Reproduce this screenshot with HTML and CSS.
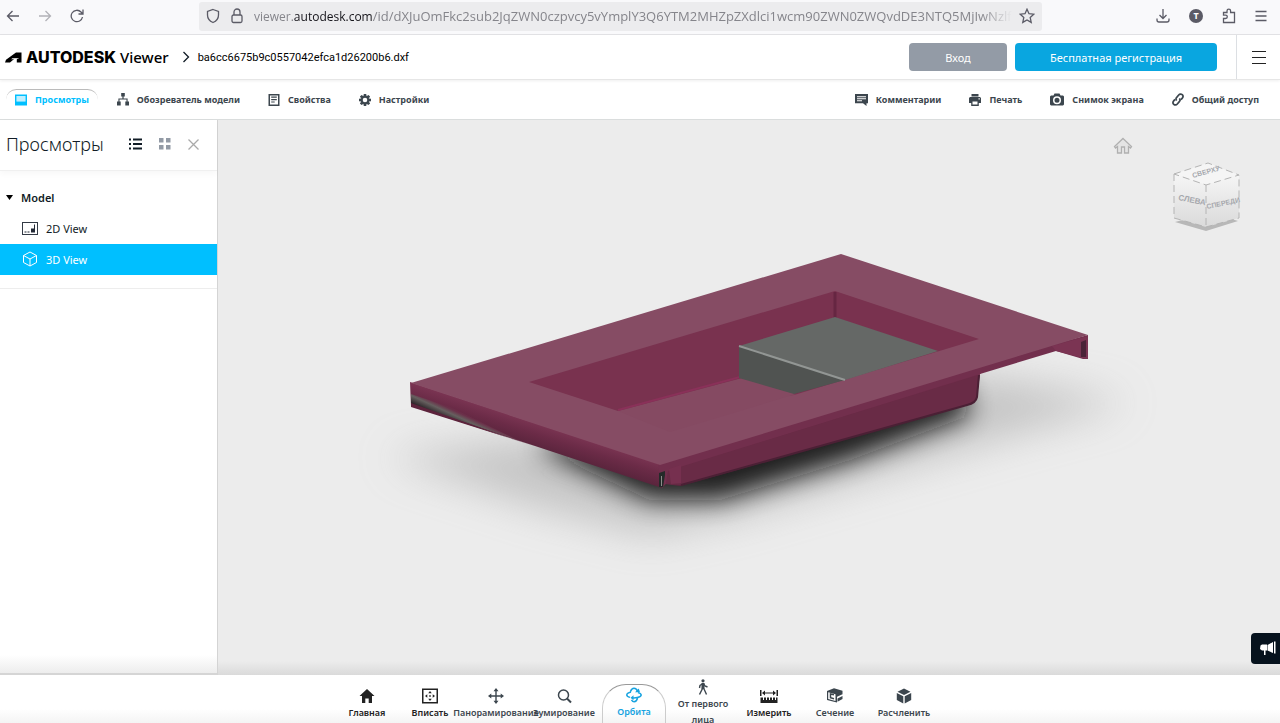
FILE: index.html
```html
<!DOCTYPE html>
<html lang="ru">
<head>
<meta charset="utf-8">
<title>Autodesk Viewer</title>
<link rel="stylesheet" href="styles.css">
</head>
<body>
<nav class="browser" aria-label="Браузер">
  <div class="browser-nav">
    <button class="icon-btn" aria-label="Назад"><svg width="14" height="14" viewBox="0 0 14 14" class="line"><path d="M13 7H1.500M6.500 2L1.500 7l5 5"/></svg></button>
    <button class="icon-btn faded" aria-label="Вперёд"><svg width="14" height="14" viewBox="0 0 14 14" class="line"><path d="M1 7h11.500M7.500 2l5 5-5 5"/></svg></button>
    <button class="icon-btn" aria-label="Обновить"><svg width="14" height="14" viewBox="0 0 14 14" class="line"><path d="M12.500 8A5.700 5.700 0 1 1 11 3l1.500 1.500M13 .5v4.500H8.500"/></svg></button>
  </div>
  <div class="address">
    <svg width="14" height="16" viewBox="0 0 14 16" class="line"><path d="M7 1.500L12.500 3.500v3.500c0 3.500-2 6-5.500 7.500C3.500 13 1.500 10.500 1.500 7V3.500z"/></svg>
    <svg width="12" height="16" viewBox="0 0 12 16" class="line"><rect x="1" y="7" width="10" height="7.500" rx="1.500"/><path d="M3 7V4a3 3 0 0 1 6 0v3"/></svg>
    <div class="url"><span class="domain">viewer.<b>autodesk.com</b></span>/id/dXJuOmFkc2sub2JqZWN0czpvcy5vYmplY3Q6YTM2MHZpZXdlci1wcm90ZWN0ZWQvdDE3NTQ5MjIwNzlfOGQ5MD</div>
    <button class="icon-btn" aria-label="Добавить закладку"><svg width="16" height="16" viewBox="0 0 16 16" class="line"><path d="M8 1.200l2 4.500 4.800.5-3.600 3.300 1 4.900L8 12l-4.200 2.400 1-4.900L1.200 6.200 6 5.700z"/></svg></button>
  </div>
  <div class="browser-tools">
    <button class="icon-btn" aria-label="Загрузки"><svg width="14" height="14" viewBox="0 0 14 14" class="line"><path d="M7 0v9M3.500 6L7 9.500 10.500 6M1 9.500V11a2 2 0 0 0 2 2h8a2 2 0 0 0 2-2V9.500"/></svg></button>
    <button class="avatar" aria-label="Профиль">T</button>
    <button class="icon-btn" aria-label="Расширения"><svg width="14" height="16" viewBox="0 0 14 16" class="line"><path d="M1.500 4.500H5V3a1.800 1.800 0 0 1 3.600 0v1.500h3.900v10h-11v-4H3.600a1.700 1.700 0 0 0 0-3.400H1.500z"/></svg></button>
    <button class="icon-btn" aria-label="Меню браузера"><svg width="12" height="12" viewBox="0 0 12 12" class="line"><path d="M.5 1.500h11M.5 6h11M.5 10.500h11"/></svg></button>
  </div>
</nav>

<header class="header">
  <a class="brand" href="#"><svg width="17" height="11" viewBox="0 0 17 11"><path d="M0 10.500L1 7.800 11 .5H16.500v10h-4.700V6.800H9.400L5 10.500z"/><path fill="#fff" d="M7.300 6.300h7l-2.500.9H6.200z"/></svg><strong>AUTODESK</strong><span>Viewer</span></a>
  <svg class="line chevron" width="8" height="12" viewBox="0 0 8 12"><path d="M1.500 1l5 5-5 5"/></svg>
  <span class="filename">ba6cc6675b9c0557042efca1d26200b6.dxf</span>
  <button class="btn sign-in">Вход</button>
  <button class="btn register">Бесплатная регистрация</button>
  <button class="menu" aria-label="Меню"><svg width="14" height="13" viewBox="0 0 14 13"><path fill="#222" d="M0 0h14v1H0zM0 6h14v1H0zM0 12h14v1H0z"/></svg></button>
</header>

<div class="toolbar">
  <button class="tool active"><svg width="12" height="12" viewBox="0 0 12 12"><path fill-rule="evenodd" d="M0 .5h12v11H0zM1.500 2v5.500h9V2z"/><path opacity=".25" d="M1.500 2h9v5.500h-9z"/></svg>Просмотры</button>
  <button class="tool"><svg width="12" height="13" viewBox="0 0 12 13"><path d="M4.200 0h3.600v3.600H6.600V5.500h4v3H12V12.500H8.300v-4h1.200v-2H2.500v2h1.200v4H0v-4h1.400v-3h4V3.600H4.200z"/></svg>Обозреватель модели</button>
  <button class="tool"><svg width="12" height="12" viewBox="0 0 12 12"><path fill-rule="evenodd" d="M.5 0h11v12H.5zM2 1.400v9.200h8V1.400zM3.200 2.600h5.600v1.200H3.200zm0 2.400h5.600v1.200H3.200zm0 2.400h3.500v1.200H3.200z"/></svg>Свойства</button>
  <button class="tool"><svg width="12" height="12" viewBox="-6 -6 12 12"><path d="M-1.200-6h2.400l.4 2.300h-3.200zM-1.200 6h2.400l.4-2.300h-3.200zM-6-1.200v2.400l2.300.4v-3.200zM6-1.200v2.400l-2.300.4v-3.200z"/><path transform="rotate(45)" d="M-1.200-6h2.400l.4 2.300h-3.200zM-1.200 6h2.400l.4-2.300h-3.200zM-6-1.200v2.400l2.300.4v-3.200zM6-1.200v2.400l-2.300.4v-3.200z"/><circle r="3.300" fill="none" stroke="#3c464e" stroke-width="2"/></svg>Настройки</button>
  <span class="spacer"></span>
  <button class="tool"><svg width="13" height="12" viewBox="0 0 13 12"><path fill-rule="evenodd" d="M0 0h13v9.200h-1.500V12L8 9.200H0zM2 2.200v1h9v-1zM2 4.200v1h9v-1zm0 2v1h5v-1z"/></svg>Комментарии</button>
  <button class="tool"><svg width="12" height="12" viewBox="0 0 12 12"><path fill-rule="evenodd" d="M2.500 0h7v2.400h-7zM1 3h10l1 1v5H9.800v3H2.200V9H0V4zm2.500 4.500v3h5v-3zM9.500 4.200v1.200h1.300V4.200z"/></svg>Печать</button>
  <button class="tool"><svg width="14" height="13" viewBox="0 0 14 13"><path fill-rule="evenodd" d="M4.500.5h5l1 2H13l1 1v8l-1 1H1l-1-1v-8l1-1h2.500zM7 3.300a4 4 0 1 0 0 8 4 4 0 0 0 0-8zm0 1.500a2.500 2.500 0 1 1 0 5 2.500 2.500 0 0 1 0-5z"/><circle cx="7" cy="7.300" r="1.300"/></svg>Снимок экрана</button>
  <button class="tool"><svg width="12" height="13" viewBox="0 0 12 13"><g fill="none" stroke="#3c464e" stroke-width="1.700"><path d="M4.700 7.500c-1-1-.9-2.300 0-3.200l2-2.300c1-1.200 2.500-1.200 3.500-.3s1 2.300.1 3.400L9 6.600"/><path d="M7.300 5.500c1 1 .9 2.300 0 3.200l-2 2.300c-1 1.200-2.500 1.200-3.500.3s-1-2.300-.1-3.400L3 6.400"/></g></svg>Общий доступ</button>
</div>

<main class="workspace">
  <aside class="panel">
    <div class="panel-head">
      <h1>Просмотры</h1>
      <button class="icon-btn" aria-label="Список"><svg width="13" height="12" viewBox="0 0 13 12"><path fill="#111c26" d="M0 .5h2v2H0zM4 .5h9v2H4zM0 5h2v2H0zM4 5h9v2H4zM0 9.500h2v2H0zM4 9.500h9v2H4z"/></svg></button>
      <button class="icon-btn" aria-label="Плитки"><svg width="12" height="12" viewBox="0 0 12 12"><path fill="#929aa5" d="M0 0h4.500v4.500H0zM7 0h4.500v4.500H7zM0 7h4.500v4.500H0zM7 7h4.500v4.500H7z"/></svg></button>
      <button class="icon-btn close" aria-label="Закрыть"><svg width="11" height="11" viewBox="0 0 11 11" class="line"><path d="M.5.5l10 10M10.500.5l-10 10"/></svg></button>
    </div>
    <div class="tree">
      <button class="tree-root"><svg width="7" height="5" viewBox="0 0 7 5"><path d="M0 0h7L3.500 5z"/></svg>Model</button>
      <button class="tree-item"><svg width="16" height="13" viewBox="0 0 16 13"><rect x=".5" y=".5" width="15" height="12" fill="none" stroke="#333a45"/><path fill="#222936" d="M9 6.500h4v4H9zM12 2.500h1v4h-1zM2.500 9.500h2v1h-2zm3 0h2v1h-2z"/></svg>2D View</button>
      <button class="tree-item selected"><svg width="16" height="16" viewBox="0 0 16 16" fill="none" stroke="#fff"><path d="M8 1l6.500 3.500v7L8 15l-6.500-3.500v-7zM1.500 4.500L8 8l6.500-3.500M8 8v7"/></svg>3D View</button>
    </div>
  </aside>

  <section class="canvas" aria-label="3D View">
    <svg class="scene" viewBox="218 120 1062 555" preserveAspectRatio="xMidYMid slice">
      <defs>
        <filter id="soft" x="-30%" y="-60%" width="160%" height="220%"><feGaussianBlur stdDeviation="20"/></filter>
        <filter id="mid" x="-30%" y="-60%" width="160%" height="220%"><feGaussianBlur stdDeviation="13"/></filter>
        <linearGradient id="side" gradientUnits="userSpaceOnUse" x1="520" y1="418" x2="512" y2="443"><stop offset="0" stop-color="#7a3452"/><stop offset=".4" stop-color="#6b2b47"/><stop offset="1" stop-color="#56233a"/></linearGradient>
        <linearGradient id="basin" gradientUnits="userSpaceOnUse" x1="820" y1="415" x2="829" y2="447"><stop offset="0" stop-color="#752f4e"/><stop offset=".3" stop-color="#692b46"/><stop offset=".8" stop-color="#672a45"/><stop offset="1" stop-color="#4c2035"/></linearGradient>
        <linearGradient id="gap" gradientUnits="userSpaceOnUse" x1="440" y1="404" x2="435" y2="415"><stop offset="0" stop-color="#6b2f49"/><stop offset=".35" stop-color="#66605f"/><stop offset="1" stop-color="#221a1f"/></linearGradient>
      </defs>
      <path filter="url(#soft)" fill="#a4a4a4" opacity=".55" d="M385 456L560 435 980 375 1130 402 1020 432 740 515 650 535 540 508z"/>
      <path filter="url(#mid)" fill="#111" opacity=".9" d="M535 446L700 430 960 380 970 415 850 460 720 500 650 500z"/>
      <path fill="url(#side)" d="M410 382L660 464 662 488 535 446 411 406z"/>
      <path fill="url(#gap)" d="M411 394L450 407 520 441 411 404z"/>
      <path fill="#5c233c" d="M411 403L512 439 535 446 411 407z"/>
      <path fill="url(#basin)" d="M660 464L990 364 980 374 977 397Q976 403 967 405L680 486 665 484z"/>
      <path fill="#722f4d" d="M658 464L980 367 1058 343 1088 335V359H1083L1056 351 980 374 682 467 662 488z"/>
      <path fill="#692b46" d="M680 467L978 375 977 397Q976 403 967 405L680 485 666 483 668 471z"/>
      <path fill="none" stroke="#4b2035" stroke-width="2" d="M979 375L977 397Q976 403 967 405L681 485"/>
      <path fill="#7b3453" d="M1052 346L1088 336V359L1083 358 1056 351z"/>
      <path fill="#4b2338" d="M1081 342l5-2v17h-5z"/>
      <path fill="#242a29" d="M659 473l6-2v4l-2 12h-4z"/><path fill="#8b8b89" d="M661 476h1v10h-1z"/><path fill="#76304f" d="M669 469l12-4v18l-10 1z"/>
      <path fill="#864c64" d="M411 383L841 254 1088 335 660 465z"/>
      <path fill="#79324f" d="M529 382L835 291 979 339 794 395 618 411z"/>
      <path fill="#854a62" d="M618 411L742 378 796 394 670 432z"/>
      <path stroke="#8a3159" stroke-width="2" d="M618 410L740 377"/>
      <path stroke="#662642" stroke-width="3" d="M835 292v27"/>
      <path fill="#656866" d="M739 346L835 317 938 351 845 380z"/>
      <path fill="#505351" d="M739 346L845 380 794 394 739 378z"/>
      <path stroke="#929694" stroke-width="2" d="M739 346L845 380"/>
    </svg>
    <button class="view-home" aria-label="Исходный вид"><svg width="20" height="18" viewBox="0 0 20 18"><path fill="#e4e4e4" stroke="#b0b0b0" stroke-width="1.300" d="M10 1.500L18.500 9.500 17.500 11 15.500 9.500V16h-4v-6h-3v6h-4V9.500L2.500 11 1.500 9.500z"/></svg></button>
    <svg class="view-cube" width="76" height="76" viewBox="0 0 76 76">
      <defs><linearGradient id="face" x1="0" x2="0" y1="0" y2="1"><stop offset="0" stop-color="#f6f6f6"/><stop offset="1" stop-color="#dadada"/></linearGradient></defs>
      <path fill="#b8b8b8" d="M6 61l15-4 32-2 16 5-32 10z"/>
      <path fill="url(#face)" d="M5 13L37 24V66L5 57zM37 24L70 14V57L37 66z"/>
      <path fill="#f5f5f5" d="M5 13L39 2 70 14 37 24z"/>
      <path fill="none" stroke="#b4b4b4" stroke-dasharray="7 4" d="M5 13L39 2 70 14 37 24zM5 13V57L37 66 70 57V14M37 24v42"/>
      <g class="cube-text"><text class="left" x="9" y="39" transform="rotate(11 9 39)">СЛЕВА</text><text x="38" y="48" transform="rotate(-12 38 48)">СПЕРЕДИ</text><text x="24" y="17" transform="rotate(-16 24 17)">СВЕРХУ</text></g>
    </svg>
    <button class="feedback" aria-label="Обратная связь"><svg width="18" height="16" viewBox="0 0 18 16"><path fill="#fff" d="M1.500 4.500L3 3.500h5v6H6.500V14H5V9.500H3L1 8zM8.500 4L14 1v11L8.500 9.500zM15 .5h1.500v12H15z"/></svg></button>
  </section>
</main>

<footer class="dock">
  <button class="dock-item dark"><svg width="16" height="16" viewBox="0 0 16 16"><path d="M8 1l7.500 7H13v7H9.700v-4.500H6.300V15H3V8H.5z"/></svg>Главная</button>
  <button class="dock-item dark"><svg width="16" height="16" viewBox="0 0 16 16"><path fill-rule="evenodd" d="M0 .5h16v15H0zM1.500 2v12h13V2zM8 3l1.800 2.300H6.200zM8 13l-1.800-2.300h3.600zM3 8l2.300-1.800v3.600zM13 8l-2.300 1.800V6.200zM7.200 7.200h1.600v1.600H7.200z"/></svg>Вписать</button>
  <button class="dock-item"><svg width="16" height="16" viewBox="0 0 16 16"><path d="M8 0l2.500 3.300H8.700v4h4V5.500L16 8l-3.300 2.500V8.700h-4v4h1.800L8 16l-2.500-3.300h1.800v-4h-4v1.800L0 8l3.300-2.500v1.800h4v-4H5.500z"/></svg>Панорамирование</button>
  <button class="dock-item"><svg width="16" height="16" viewBox="0 0 16 16"><circle cx="7.500" cy="7" r="5" fill="none" stroke="#3c464e" stroke-width="1.500"/><path fill="none" stroke="#3c464e" stroke-width="2" d="M11 10.500l4 4"/></svg>Зумирование</button>
  <button class="dock-item current"><svg width="16" height="16" viewBox="0 0 16 16"><g fill="none" stroke="#17a3e0" stroke-width="1.500"><path d="M4.500 4.500C5.200 2.500 6.500 1.300 8 1.300c1.700 0 3 1.200 3.600 3.200M5 5C2.300 5.600.8 6.700.8 7.900c0 1 1.200 1.900 3.200 2.500M12 5.600c2 .6 3.200 1.400 3.200 2.400s-1.500 2-4 2.600C9.500 11 8 11 6.500 10.900M5.500 12.800c.7 1.200 1.500 1.900 2.600 1.900 1.600 0 2.900-1.400 3.500-3.700"/></g><path fill="#17a3e0" d="M7.500 8.300v5L4.500 10.800zM9 5.200h5L12.800 1.500z"/></svg>Орбита</button>
  <button class="dock-item wrapped"><svg width="16" height="16" viewBox="0 0 16 16"><circle cx="8" cy="1.800" r="1.600"/><path fill="none" stroke="#3c464e" stroke-width="1.400" d="M8 4L7.500 9.500 4.500 15.500M8 8.500l1.500 2.500 2 4.500M8 4.500L5 6.500 4.500 9M8.500 4.500L10 7l2.500 1"/><path d="M6.500 4h3v6h-3z"/></svg>От первого лица</button>
  <button class="dock-item dark"><svg width="18" height="16" viewBox="0 0 18 16"><path d="M0 2h1.500v6H0zM16.500 2H18v6h-1.500zM2 5l3-2.500v2h8v-2L16 5l-3 2.500v-2H5v2zM.5 9.500H3V12h1V9.500h2V12h1V9.500h2V12h1V9.500h2V12h1V9.500h2V12h1V9.500h1.500v5.500H.5z"/></svg>Измерить</button>
  <button class="dock-item"><svg width="16" height="16" viewBox="0 0 16 16"><path fill-rule="evenodd" d="M0 3l7-2.700 8.500 2.400v3.500L10 8.700V14.500L0 12zM1.200 4.300v6.700l7.300 2V6.300zM10.500 10.500l5-2.500v3l-5 2.700z"/><path fill="none" stroke="#3c464e" stroke-width="1.500" d="M7 6.800L3.500 6v3.800l3.500 1"/></svg>Сечение</button>
  <button class="dock-item"><svg width="16" height="16" viewBox="0 0 16 16"><path d="M8 .5l6.500 3.200L8 6.900 1.500 3.700zM.8 5l6.500 3.200v7.300L.8 12zM15.200 5L8.700 8.200v7.300l6.500-3.500z"/></svg>Расчленить</button>
</footer>
</body>
</html>
```
FILE: styles.css
```css
* { box-sizing: border-box; }
body { margin: 0; height: 100vh; display: flex; flex-direction: column; overflow: hidden; background: #fff; color: #111c26; font-family: "Noto Sans", "Open Sans", sans-serif; font-size: 11px; }
button { font: inherit; color: inherit; background: none; border: 0; padding: 0; cursor: pointer; }
svg { display: block; flex: none; }
.line { fill: none; stroke: currentColor; stroke-width: 1.3; }
.icon-btn { display: flex; color: #5b5b66; }
.faded { opacity: .45; }

.browser { display: flex; align-items: center; height: 35px; flex: none; padding: 0 13px 2px 6px; background: #f9f9fb; border-bottom: 1px solid #e3e3e6; color: #5b5b66; }
.browser-nav { display: flex; gap: 18px; width: 193px; flex: none; }
.address { display: flex; align-items: center; gap: 11px; flex: 1; min-width: 0; height: 29px; padding: 0 7px; border-radius: 3px; background: #ececee; }
.url { flex: 1; min-width: 0; margin-right: -4px; overflow: hidden; white-space: nowrap; font: 13px "Open Sans", "Noto Sans", sans-serif; color: #85858b; -webkit-mask-image: linear-gradient(to left, transparent, #000 32px); mask-image: linear-gradient(to left, transparent, #000 32px); }
.domain { font-size: 12px; }
.domain b { color: #15141a; font-weight: 400; }
.browser-tools { display: flex; align-items: center; justify-content: flex-end; gap: 19px; width: 225px; flex: none; }
.avatar { width: 14px; height: 14px; border-radius: 50%; background: #5b5b66; color: #fff; font-size: 9px; font-weight: 700; line-height: 14px; }

.header { display: flex; align-items: center; height: 45px; flex: none; padding-left: 5px; border-bottom: 1px solid #e6e6e6; box-shadow: 0 1px 3px #0001; }
.brand { display: flex; align-items: center; gap: 4px; color: #000; text-decoration: none; font-size: 15px; font-weight: 500; }
.brand strong { font-family: Inter, sans-serif; font-size: 16px; font-weight: 800; }
.chevron { margin: 0 8px 0 13px; }
.filename { flex: 1; font-family: Roboto, sans-serif; font-size: 11px; color: #000; }
.btn { height: 28px; border-radius: 4px; color: #fff; font-size: 11px; }
.sign-in { width: 98px; background: #939ba6; }
.register { width: 202px; margin: 0 19px 0 8px; background: #09a6e0; }
.menu { display: flex; align-items: center; justify-content: center; width: 44px; height: 44px; border-left: 1px solid #dcdfe3; }

.toolbar { display: flex; align-items: center; gap: 10px; height: 40px; flex: none; padding: 0 12px 0 6px; border-bottom: 1px solid #dadddd; }
.tool { display: flex; align-items: center; gap: 8px; height: 21px; padding: 0 9px; color: #3c464e; fill: #3c464e; font-size: 9px; font-weight: 700; white-space: nowrap; }
.tool.active { padding-bottom: 1px; color: #00bfff; fill: #00bfff; border-top: 1px solid #bbb; border-radius: 12px; }
.spacer { flex: 1; }

.workspace { display: flex; flex: 1; min-height: 0; }
.panel { width: 218px; flex: none; border-right: 1px solid #d4d4d4; border-bottom: 2px solid #d5d5d5; background: linear-gradient(to top, #ededed, #fff 18px); }
.panel-head { display: flex; align-items: center; gap: 17px; height: 51px; padding: 0 18px 2px 6px; border-bottom: 1px solid #f0f0f0; box-shadow: 0 3px 6px #00000008; }
.panel-head h1 { flex: 1; margin: 0; font-size: 18px; font-weight: 300; white-space: nowrap; }
.close { color: #aaa; }
.tree { padding: 12px 0 13px; border-bottom: 1px solid #ededed; }
.tree-root, .tree-item { display: flex; align-items: center; width: 100%; height: 31px; padding-bottom: 1px; }
.tree-root { height: 30px; gap: 8px; padding-left: 6px; font-weight: 600; }
.tree-item { gap: 8px; padding-left: 22px; }
.selected { background: #00bfff; color: #fff; }

.canvas { position: relative; flex: 1; min-width: 0; background: #ececec; overflow: hidden; }
.canvas::after { content: ""; position: absolute; left: 0; right: 0; bottom: 0; height: 14px; background: linear-gradient(to top, #dadada, #ececec00); }
.scene { width: 100%; height: 100%; }
.view-home { position: absolute; top: 17px; right: 147px; }
.view-cube { position: absolute; top: 41px; right: 35px; }
.cube-text { fill: #a6a8ad; font: bold 7px "Liberation Sans", sans-serif; }
.cube-text .left { font-size: 8px; }
.feedback { position: absolute; right: 0; bottom: 11px; z-index: 1; display: flex; align-items: center; width: 29px; height: 31px; padding-left: 8px; border-radius: 4px 0 0 4px; background: #06121d; }

.dock { display: grid; grid-template-columns: 62px 64px 68px 68px 72px 66px 66px 66px 72px; justify-content: center; height: 48px; flex: none; padding: 9px 4px 0 0; background: linear-gradient(to top, #f4f4f4, #fff 14px); overflow: hidden; }
.dock-item { display: flex; flex-direction: column; align-items: center; gap: 1px; min-width: 0; height: 41px; padding-top: 4px; color: #3c464e; fill: #3c464e; font-size: 9px; font-weight: 600; line-height: 16px; white-space: nowrap; }
.dock-item.dark { color: #222; fill: #222; }
.dock-item.current { justify-self: center; width: 64px; padding-top: 2px; color: #17a3e0; border: 1px solid #999; border-bottom: 0; border-color: #999 #ccc; border-radius: 24px 24px 0 0; }
.dock-item.wrapped { margin-top: -9px; height: 55px; white-space: normal; }
```
